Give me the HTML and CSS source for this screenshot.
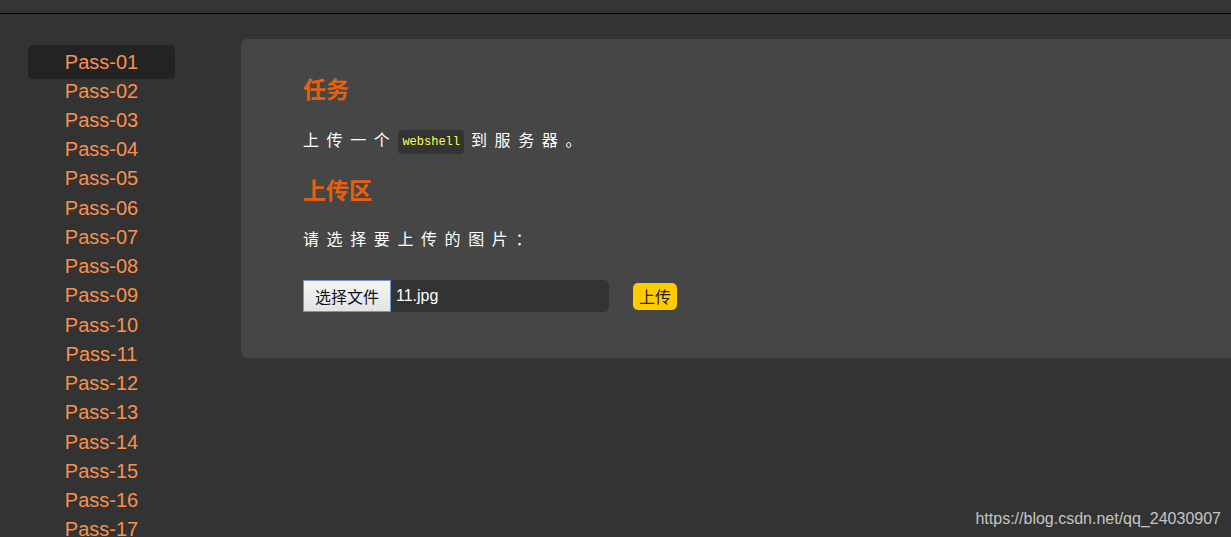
FILE: index.html
```html
<!DOCTYPE html>
<html lang="zh">
<head>
<meta charset="utf-8">
<title>upload-labs</title>
<link rel="stylesheet" href="styles.css">
</head>
<body>
<div class="topbar"></div>
<div class="layout">
  <ul class="menu">
    <li class="active">Pass-01</li>
    <li>Pass-02</li>
    <li>Pass-03</li>
    <li>Pass-04</li>
    <li>Pass-05</li>
    <li>Pass-06</li>
    <li>Pass-07</li>
    <li>Pass-08</li>
    <li>Pass-09</li>
    <li>Pass-10</li>
    <li>Pass-11</li>
    <li>Pass-12</li>
    <li>Pass-13</li>
    <li>Pass-14</li>
    <li>Pass-15</li>
    <li>Pass-16</li>
    <li>Pass-17</li>
  </ul>
  <div class="panel">
    <h2 class="title">任务</h2>
    <p class="text first-text">上传一个<code class="code">webshell</code>到服务器。</p>
    <h2 class="title second">上传区</h2>
    <p class="text second-text">请选择要上传的图片：</p>
    <div class="form">
      <div class="file">
        <span class="file-btn">选择文件</span>
        <span class="file-name">11.jpg</span>
      </div>
      <span class="upload">上传</span>
    </div>
  </div>
</div>
<div class="watermark">https://blog.csdn.net/qq_24030907</div>
</body>
</html>
```
FILE: styles.css
```css
html, body {
  margin: 0;
  padding: 0;
  height: 100%;
  overflow: hidden;
}
body {
  background: #333333;
  font-family: "Liberation Sans", Arial, "Noto Sans CJK SC", sans-serif;
  position: relative;
}
.topbar {
  height: 13px;
  background: #353535;
  border-bottom: 1px solid #000;
}
.layout {
  display: flex;
  align-items: flex-start;
}
.menu {
  list-style: none;
  margin: 33.4px 0 0 28px;
  padding: 0;
  width: 147px;
  flex-shrink: 0;
}
.menu li {
  text-align: center;
  font-size: 20px;
  line-height: 29.25px;
  color: #f7914d;
}
.menu li.active {
  background: #232323;
  border-radius: 5px;
  padding: 3.4px 0 1.4px;
  margin: -2.4px 0;
}
.panel {
  margin: 25px 0 0 66px;
  flex: 1;
  height: 319px;
  box-sizing: border-box;
  background: #464646;
  border-radius: 6px 0 0 6px;
  padding: 35px 0 0 62px;
}
.title {
  margin: 0;
  font-size: 23px;
  line-height: 28px;
  font-weight: bold;
  color: #e8600f;
  font-family: "Noto Sans CJK SC", sans-serif;
}
.second {
  margin-top: 21px;
}
.text {
  margin: 0;
  font-size: 16px;
  line-height: 22px;
  color: #ffffff;
  letter-spacing: 7.6px;
  font-family: "Noto Sans CJK SC", sans-serif;
}
.first-text {
  margin-top: 26px;
}
.second-text {
  margin-top: 24px;
}
.code {
  display: inline-block;
  background: #333333;
  color: #ffff55;
  font-family: "Liberation Mono", "DejaVu Sans Mono", monospace;
  font-size: 12px;
  letter-spacing: 0;
  line-height: 24px;
  padding: 0 4px;
  border-radius: 4px;
  margin: 0 7px 0 1px;
  vertical-align: 1px;
}
.form {
  display: flex;
  align-items: center;
  margin-top: 31px;
}
.file {
  display: flex;
  width: 306px;
  height: 32px;
  background: #333333;
  border-radius: 0 5px 5px 0;
}
.file-btn {
  box-sizing: border-box;
  width: 88px;
  height: 32px;
  background: linear-gradient(#f6f6f6, #e3e3e3);
  border: 1px solid #6b95d6;
  color: #111;
  font-size: 16px;
  font-family: "Noto Sans CJK SC", sans-serif;
  display: flex;
  align-items: center;
  justify-content: center;
}
.file-name {
  color: #ffffff;
  font-size: 16px;
  line-height: 32px;
  padding-left: 5px;
}
.upload {
  margin-left: 24px;
  background: #ffcc00;
  color: #222;
  font-size: 16px;
  font-family: "Noto Sans CJK SC", sans-serif;
  height: 27px;
  line-height: 27px;
  padding: 0 6px;
  border-radius: 5px;
}
.watermark {
  position: absolute;
  right: 10px;
  bottom: 9px;
  color: #c4c4c4;
  font-size: 16px;
  font-family: "Liberation Sans", Arial, sans-serif;
}
```
